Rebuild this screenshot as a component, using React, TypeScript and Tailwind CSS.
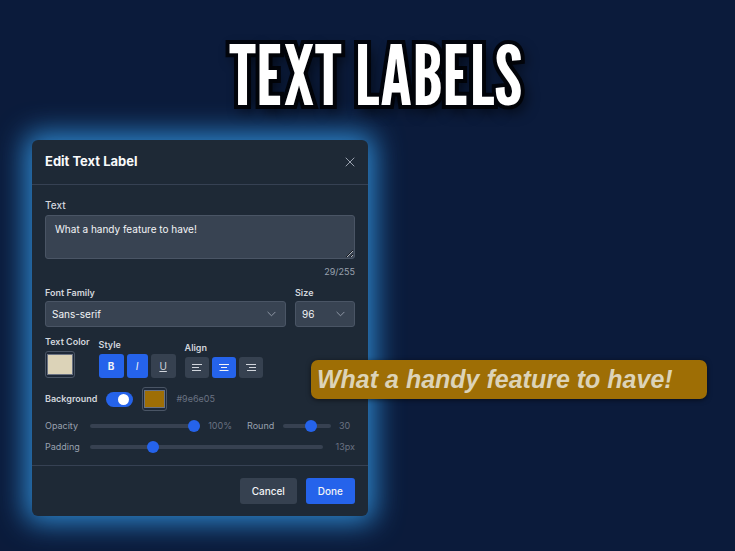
import { useState } from "react";
import type { InputHTMLAttributes, ReactNode } from "react";
import clsx from "clsx";

const labelClass = "block text-[9px] leading-3 font-semibold text-gray-300";

function Chevron() {
  return (
    <svg
      viewBox="0 0 10 6"
      fill="none"
      stroke="currentColor"
      className="pointer-events-none absolute top-1/2 right-[10px] h-[6px] w-[9px] -translate-y-1/2 text-gray-400"
    >
      <path d="M1 1l4 4 4-4" strokeLinecap="round" strokeLinejoin="round" />
    </svg>
  );
}

function Select({ id, options }: { id: string; options: string[] }) {
  return (
    <div className="relative">
      <select
        id={id}
        className="block h-[26px] w-full appearance-none rounded-[3px] border border-gray-600 bg-[#384352] px-[6px] text-[10px] text-gray-100"
      >
        {options.map((option) => (
          <option key={option}>{option}</option>
        ))}
      </select>
      <Chevron />
    </div>
  );
}

function Slider(props: InputHTMLAttributes<HTMLInputElement>) {
  return (
    <input
      type="range"
      {...props}
      className="h-3 w-0 min-w-0 flex-1 appearance-none bg-transparent [&::-webkit-slider-runnable-track]:h-1 [&::-webkit-slider-runnable-track]:rounded-full [&::-webkit-slider-runnable-track]:bg-[#374151] [&::-webkit-slider-thumb]:-mt-1 [&::-webkit-slider-thumb]:size-3 [&::-webkit-slider-thumb]:appearance-none [&::-webkit-slider-thumb]:rounded-full [&::-webkit-slider-thumb]:bg-[#2563eb]"
    />
  );
}

function ColorInput({
  id,
  label,
  value,
  onChange,
  className,
}: {
  id: string;
  label: string;
  value: string;
  onChange: (value: string) => void;
  className: string;
}) {
  return (
    <input
      id={id}
      type="color"
      aria-label={label}
      value={value}
      onChange={(e) => onChange(e.target.value)}
      className={clsx(
        "block appearance-none rounded-[3px] border border-gray-600 bg-gray-800 px-[1px] py-[2px] [&::-webkit-color-swatch]:rounded-none [&::-webkit-color-swatch]:border [&::-webkit-color-swatch]:border-gray-500 [&::-webkit-color-swatch-wrapper]:p-0",
        className
      )}
    />
  );
}

function ToolButton({
  label,
  active,
  onClick,
  className,
  children,
}: {
  label: string;
  active: boolean;
  onClick: () => void;
  className: string;
  children: ReactNode;
}) {
  return (
    <button
      type="button"
      aria-label={label}
      aria-pressed={active}
      onClick={onClick}
      className={clsx(
        "flex items-center justify-center rounded-[3px] text-[10px]",
        active ? "bg-[#2563eb] text-gray-100" : "bg-[#364150] text-gray-300",
        className
      )}
    >
      {children}
    </button>
  );
}

const alignPaths = {
  left: "M1 1.5h10M1 4.5h7M1 7.5h9",
  center: "M1 1.5h10M3 4.5h6M1.5 7.5h9",
  right: "M1 1.5h10M4 4.5h7M2 7.5h9",
};

type Align = keyof typeof alignPaths;

export default function App() {
  const [text, setText] = useState("What a handy feature to have!");
  const [textColor, setTextColor] = useState("#dcd3b8");
  const [background, setBackground] = useState("#9e6e05");
  const [bold, setBold] = useState(true);
  const [italic, setItalic] = useState(true);
  const [underline, setUnderline] = useState(false);
  const [align, setAlign] = useState<Align>("center");

  return (
    <main className="relative min-h-screen bg-[#0b1b3b] pb-[35px] font-[Inter,sans-serif]">
      <h1 className="flex h-[140px] items-center justify-center pt-2 pl-4 font-['League_Gothic','Bebas_Neue','Liberation_Sans_Narrow','Liberation_Sans',sans-serif] text-[83px] leading-none font-normal whitespace-nowrap text-white [paint-order:stroke_fill] [-webkit-text-stroke:8px_#03060e] [text-shadow:4px_6px_14px_#000c]">
        TEXT LABELS
      </h1>

      <form
        onSubmit={(e) => e.preventDefault()}
        className="ml-8 w-[336px] rounded-md bg-[#1e2936] shadow-[0_0_28px_7px_#2e86cc]"
      >
        <header className="flex h-[45px] items-center justify-between border-b border-gray-700 px-[13px]">
          <h2 className="text-[13px] font-bold text-gray-50">
            Edit Text Label
          </h2>
          <button type="button" aria-label="Close" className="text-gray-400">
            <svg
              viewBox="0 0 10 10"
              stroke="currentColor"
              fill="none"
              className="size-[10px]"
            >
              <path d="M1 1l8 8M9 1l-8 8" strokeLinecap="round" />
            </svg>
          </button>
        </header>

        <div className="px-[13px] pt-[14px] pb-3">
          <label
            htmlFor="text"
            className="block pb-1 text-[10px] leading-3 font-medium text-gray-300"
          >
            Text
          </label>
          <textarea
            id="text"
            value={text}
            maxLength={255}
            onChange={(e) => setText(e.target.value)}
            className="block h-11 w-full resize-y rounded-[3px] border border-gray-600 bg-[#384352] px-[9px] py-[5px] text-[10px] leading-4 text-gray-100"
          />
          <p className="pt-[7px] text-right text-[9px] leading-3 text-gray-400">
            {text.length}/255
          </p>

          <div className="flex gap-[9px] pt-[9px]">
            <div className="flex-1">
              <label htmlFor="family" className={clsx(labelClass, "pb-[2px]")}>
                Font Family
              </label>
              <Select id="family" options={["Sans-serif", "Serif", "Mono"]} />
            </div>
            <div className="w-[60px]">
              <label htmlFor="size" className={clsx(labelClass, "pb-[2px]")}>
                Size
              </label>
              <Select id="size" options={["96", "72", "48"]} />
            </div>
          </div>

          <div className="flex items-end gap-[9px] pt-[9px]">
            <div>
              <label htmlFor="text-color" className={clsx(labelClass, "pb-[3px]")}>
                Text Color
              </label>
              <ColorInput
                id="text-color"
                label="Text Color"
                value={textColor}
                onChange={setTextColor}
                className="h-[27px] w-[30px]"
              />
            </div>
            <div>
              <span className={clsx(labelClass, "pb-[3px]")}>Style</span>
              <div className="flex gap-[3px]">
                <ToolButton
                  label="Bold"
                  active={bold}
                  onClick={() => setBold(!bold)}
                  className="h-6 w-[25px] font-bold"
                >
                  B
                </ToolButton>
                <ToolButton
                  label="Italic"
                  active={italic}
                  onClick={() => setItalic(!italic)}
                  className="h-6 w-[21px] italic"
                >
                  I
                </ToolButton>
                <ToolButton
                  label="Underline"
                  active={underline}
                  onClick={() => setUnderline(!underline)}
                  className="h-6 w-[25px] underline"
                >
                  U
                </ToolButton>
              </div>
            </div>
            <div>
              <span className={clsx(labelClass, "pb-[3px]")}>Align</span>
              <div className="flex gap-[3px]">
                {(Object.keys(alignPaths) as Align[]).map((name) => (
                  <ToolButton
                    key={name}
                    label={name}
                    active={align === name}
                    onClick={() => setAlign(name)}
                    className="h-[21px] w-6"
                  >
                    <svg
                      viewBox="0 0 12 9"
                      stroke="currentColor"
                      className="h-[9px] w-3"
                    >
                      <path d={alignPaths[name]} />
                    </svg>
                  </ToolButton>
                ))}
              </div>
            </div>
          </div>

          <div className="flex items-center gap-[9px] pt-[9px]">
            <label htmlFor="has-background" className={labelClass}>
              Background
            </label>
            <input
              id="has-background"
              type="checkbox"
              role="switch"
              defaultChecked
              className="flex h-[15px] w-[27px] appearance-none items-center rounded-full bg-gray-600 px-1 before:size-[11px] before:rounded-full before:bg-white checked:justify-end checked:bg-[#2563eb]"
            />
            <ColorInput
              id="background"
              label="Background Color"
              value={background}
              onChange={setBackground}
              className="h-6 w-[25px]"
            />
            <span className="text-[9px] leading-3 text-gray-500">
              {background}
            </span>
          </div>

          <div className="flex items-center pt-[9px] text-[9px] leading-3 text-gray-500">
            <label htmlFor="opacity" className="w-[45px] text-gray-400">
              Opacity
            </label>
            <Slider id="opacity" min={0} max={100} defaultValue={100} />
            <span className="w-8 text-right">100%</span>
            <label htmlFor="round" className="w-[51px] pl-[15px] text-gray-400">
              Round
            </label>
            <div className="flex w-12">
              <Slider id="round" min={0} max={50} defaultValue={30} />
            </div>
            <span className="w-6 pl-2">30</span>
          </div>

          <div className="flex items-center pt-[9px] text-[9px] leading-3 text-gray-500">
            <label htmlFor="padding" className="w-[45px] text-gray-400">
              Padding
            </label>
            <Slider id="padding" min={0} max={50} defaultValue={13} />
            <span className="w-8 text-right">13px</span>
          </div>
        </div>

        <footer className="flex justify-end gap-[9px] border-t border-gray-700 px-[13px] py-3">
          <button
            type="button"
            className="h-[26px] rounded-[3px] bg-[#364150] px-3 text-[10px] font-medium text-gray-100"
          >
            Cancel
          </button>
          <button
            type="submit"
            className="h-[26px] rounded-[3px] bg-[#2563eb] px-3 text-[10px] font-medium text-gray-100"
          >
            Done
          </button>
        </footer>
      </form>

      <p
        className="absolute top-[360px] left-[311px] w-[396px] rounded-[7px] px-[6px] font-['Liberation_Sans',Arial,sans-serif] text-[25px] leading-[39px] font-bold whitespace-nowrap italic shadow-[0_1px_5px_#0008]"
        style={{ backgroundColor: background, color: textColor }}
      >
        {text}
      </p>
    </main>
  );
}
